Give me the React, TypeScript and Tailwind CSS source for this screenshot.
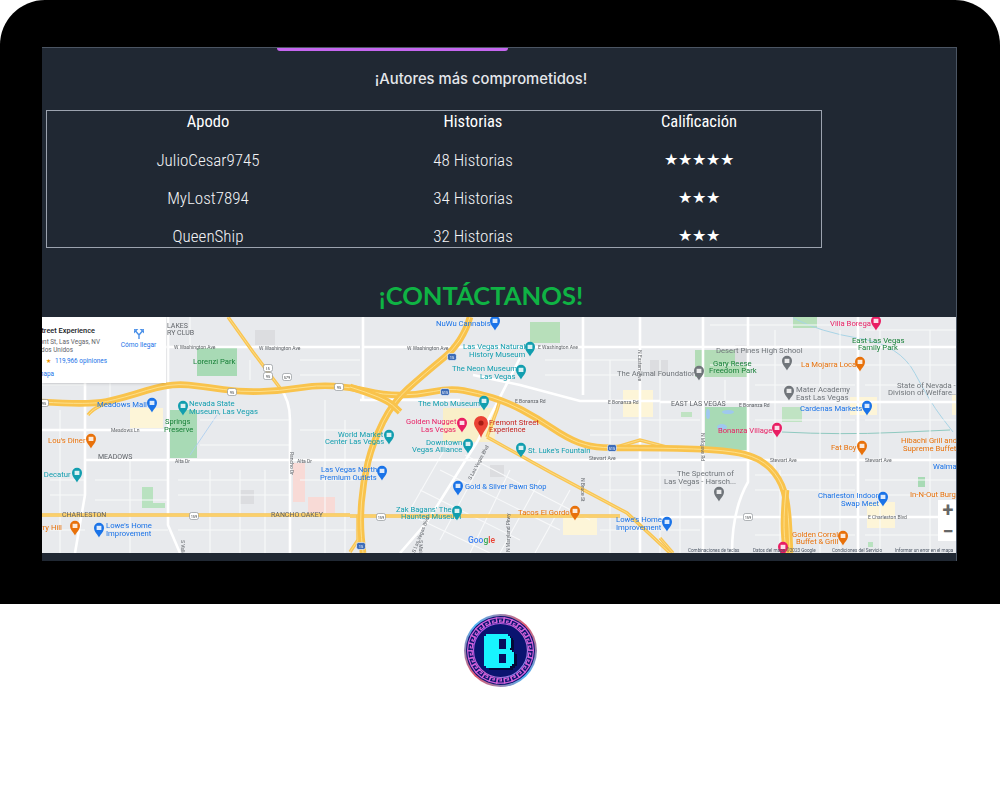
type Pt = [number, number];

// turns a list of points into a smooth path, midpoint to midpoint
function smooth(p: Pt[]) {
  let d = `M${p[0][0]} ${p[0][1]}`;
  for (let i = 1; i < p.length - 1; i++) {
    const mx = (p[i][0] + p[i + 1][0]) / 2;
    const my = (p[i][1] + p[i + 1][1]) / 2;
    d += `Q${p[i][0]} ${p[i][1]} ${mx} ${my}`;
  }
  const last = p[p.length - 1];
  return d + `L${last[0]} ${last[1]}`;
}

const mainRoads: string[] = [
  "M42 347H360M363 347H957",
  "M42 430H168",
  "M85 460H957",
  "M660 402H957",
  "M473 375L520 385L580 401H660",
  "M660 517H957",
  "M85 317V495L75 553",
  "M168 317V525L180 553",
  "M280 388Q290 400 290 420V553",
  "M363 317V400",
  "M583 317V395",
  "M640 317V553",
  "M703 317V553",
  "M748 317V482Q732 510 732 553",
  "M858 317V553",
  "M520 358L477 442L427 522L400 553",
  "M360 400H460",
];

const sideStreets: string[] = [
  "M42 370H85M42 385H85M50 442H85M50 480H85M50 495H85M50 530H85M95 480H168M95 500H168M95 530H168",
  "M178 480H290M178 495H290M178 530H290M200 445H290M200 420H290M300 360H360M300 375H360M300 430H360",
  "M300 480H355M300 530H355M545 360H640M545 375H640M590 420H700M590 435H640M600 475H700M600 490H700",
  "M600 530H700M710 325H855M710 365H855M755 385H855M755 420H855M755 475H855M755 490H855M755 535H855",
  "M865 330H957M865 365H957M865 385H957M865 420H957M865 480H957M865 495H957M865 535H957",
  "M110 317V400M60 410V553M130 460V553M210 470V553M240 470V553M265 470V553M325 400V553M345 420V553",
  "M190 317V345M250 360V380M610 360V553M660 360V553M680 470V553M725 380V400M775 330V470M820 330V553",
  "M840 330V553M880 330V553M930 330V553M780 470V553",
  "M420 490L520 540M400 510L490 553M440 470L560 530M465 455L590 520M490 440L610 505M450 440L410 510",
  "M480 465L440 540M510 470L470 553M540 480L500 553M570 490L535 553",
];

const freeways: string[] = [
  smooth([[42, 402], [90, 405], [123, 398], [170, 383], [207, 387], [240, 392], [280, 391], [317, 385], [350, 387], [383, 395], [417, 395], [450, 388], [477, 393], [507, 402], [537, 418], [567, 438], [590, 447], [617, 448], [660, 448], [727, 450], [760, 458], [780, 478], [788, 505], [790, 553]]),
  smooth([[470, 317], [463, 342], [423, 375], [393, 402], [373, 442], [363, 482], [360, 522], [363, 553]]),
  smooth([[350, 387], [385, 398], [400, 412]]),
  smooth([[786, 490], [783, 520], [786, 553]]),
];

const ramps: string[] = [
  "M228 317L253 352L280 388",
  "M42 515H350",
  "M350 516H620",
  "M487 437L550 472L627 513L670 553",
  "M350 552L358 540V515",
  "M660 538L673 553",
  "M88 415Q95 405 123 398",
  "M617 447L640 440L670 448",
  "M487 437L497 410L500 400",
];

const blocks: [number, number, number, number, string][] = [
  [197, 348, 40, 28, "#a8dab5"], [170, 410, 27, 48, "#a8dab5"], [142, 487, 11, 21, "#b9e2c0"],
  [153, 503, 12, 5, "#b9e2c0"], [530, 322, 30, 21, "#b7dfba"], [695, 350, 52, 27, "#b3dcb7"],
  [705, 407, 42, 43, "#a8dab5"], [782, 407, 20, 15, "#c0e3c3"], [681, 412, 11, 5, "#c0e3c3"],
  [793, 317, 24, 11, "#b7dfba"], [918, 477, 7, 10, "#a8dab5"], [868, 542, 5, 5, "#b9e2c0"],
  [130, 408, 33, 20, "#fdf5d8"], [623, 390, 30, 27, "#fdf5d8"], [563, 518, 34, 17, "#fdf5d8"],
  [850, 397, 27, 18, "#fdf5d8"], [867, 502, 28, 26, "#fdf5d8"], [443, 408, 52, 34, "#f9efc9"],
  [952, 395, 5, 20, "#fdf5d8"], [293, 463, 12, 39, "#f8dad6"], [308, 497, 27, 16, "#f8dad6"],
  [90, 360, 30, 22, "#dcdde0"], [240, 490, 14, 14, "#dcdde0"], [490, 465, 14, 12, "#dcdde0"],
  [735, 345, 12, 20, "#dcdde0"], [255, 330, 20, 15, "#dcdde0"], [650, 360, 18, 16, "#dcdde0"],
];

const teal = "#129eaf";
const blue = "#1a73e8";
const orange = "#e8710a";
const pink = "#e91e63";
const green = "#188038";
const gray = "#70757a";
const dark = "#5f6368";

const mapText: [number, number, string, string, number, number?][] = [
  [97, 407, "Meadows Mall", blue, 7.7], [189, 406, "Nevada State", teal, 7.7], [189, 414, "Museum, Las Vegas", teal, 7.7],
  [165, 424, "Springs", green, 7.5], [164, 432, "Preserve", green, 7.5], [48, 443, "Lou's Diner", orange, 7.7],
  [98, 459, "MEADOWS", dark, 7], [38, 477, "s Decatur", teal, 7.7], [36, 530, "erry Hill", orange, 7.7],
  [106, 528, "Lowe's Home", blue, 7.7], [106, 536, "Improvement", blue, 7.7], [62, 517, "CHARLESTON", dark, 7],
  [271, 517, "RANCHO OAKEY", dark, 7], [167, 328, "LAKES", dark, 7], [167, 335, "RY CLUB", dark, 7],
  [193, 364, "Lorenzi Park", green, 7.7], [174, 348.5, "W Washington Ave", dark, 5], [259, 350, "W Washington Ave", dark, 5],
  [111, 432, "Meadows Ln", dark, 5], [175, 463, "Alta Dr", dark, 5], [297, 463, "Alta Dr", dark, 5],
  [338, 437, "World Market", teal, 7.6], [325, 444, "Center Las Vegas", teal, 7.6], [321, 472, "Las Vegas North", blue, 7.6],
  [320, 480, "Premium Outlets", blue, 7.6], [436, 326, "NuWu Cannabis", blue, 7.7], [463, 349, "Las Vegas Natural", teal, 7.7],
  [469, 357, "History Museum", teal, 7.7], [452, 371, "The Neon Museum", teal, 7.7], [480, 379, "Las Vegas", teal, 7.7],
  [418, 406, "The Mob Museum", teal, 7.7], [406, 424, "Golden Nugget", pink, 7.6], [421, 432, "Las Vegas", pink, 7.6],
  [489, 425, "Fremont Street", "#c5221f", 7.5], [489, 432, "Experience", "#c5221f", 7.5], [426, 445, "Downtown", teal, 7.7],
  [412, 452, "Vegas Alliance", teal, 7.7], [465, 489, "Gold & Silver Pawn Shop", blue, 7.5], [396, 512, "Zak Bagans' The", teal, 7.6],
  [401, 519, "Haunted Museum", teal, 7.6], [518, 515, "Tacos El Gordo", orange, 7.7], [528, 453, "St. Luke's Fountain", teal, 7.5],
  [616, 522, "Lowe's Home", blue, 7.7], [616, 530, "Improvement", blue, 7.7], [617, 376, "The Animal Foundation", gray, 7.7],
  [716, 353, "Desert Pines High School", gray, 7.7], [713, 366, "Gary Reese", green, 7.7], [709, 373, "Freedom Park", green, 7.7],
  [801, 367, "La Mojarra Loca", orange, 7.7], [796, 392, "Mater Academy", gray, 7.7], [796, 400, "East Las Vegas", gray, 7.7],
  [671, 406, "EAST LAS VEGAS", dark, 7], [800, 411, "Cardenas Markets", blue, 7.7], [718, 433, "Bonanza Village", pink, 7.6],
  [831, 450, "Fat Boy", orange, 7.7], [677, 476, "The Spectrum of", gray, 7.7], [664, 484, "Las Vegas - Harsch...", gray, 7.7],
  [818, 498, "Charleston Indoor", blue, 7.6], [841, 506, "Swap Meet", blue, 7.7], [792, 537, "Golden Corral", orange, 7.6],
  [796, 544, "Buffet & Grill", orange, 7.6], [830, 326, "Villa Borega", pink, 7.7], [852, 343, "East Las Vegas", green, 7.7],
  [858, 350, "Family Park", green, 7.7], [897, 388, "State of Nevada -", gray, 7.7], [888, 395, "Division of Welfare...", gray, 7.7],
  [901, 443, "Hibachi Grill and", orange, 7.7], [903, 451, "Supreme Buffet", orange, 7.7], [933, 469, "Walmart", blue, 7.7],
  [910, 497, "In-N-Out Burger", orange, 7.7], [739, 407, "E Bonanza Rd", dark, 5], [515, 403, "E Bonanza Rd", dark, 5],
  [608, 404, "E Bonanza Rd", dark, 5], [538, 349, "E Washington Ave", dark, 5], [407, 350, "W Washington Ave", dark, 5],
  [589, 460, "Stewart Ave", dark, 5], [770, 462, "Stewart Ave", dark, 5], [865, 462, "Stewart Ave", dark, 5],
  [868, 519, "E Charleston Blvd", dark, 5],
  // names that run along the streets
  [290, 452, "Rancho Dr", dark, 5, 90], [471, 480, "S Las Vegas Blvd", dark, 5, -62], [638, 350, "N Eastern Ave", dark, 5, 90],
  [581, 478, "N Bruce St", dark, 5, 90], [701, 433, "N Mojave Rd", dark, 5, 90], [415, 553, "S Las Vegas Blvd", dark, 5, -68],
  [510, 552, "N Maryland Pkwy", dark, 5, -90], [419, 540, "S Main St", dark, 5, 90], [181, 540, "S Valley View", dark, 5, 90],
];

const pins: [number, number, string][] = [
  [152, 404, blue], [183, 407, teal], [91, 440, orange], [77, 474, teal], [75, 527, orange], [99, 529, blue],
  [495, 322, blue], [530, 348, teal], [521, 371, teal], [484, 402, teal], [462, 424, pink], [468, 445, teal],
  [389, 436, teal], [382, 472, blue], [458, 487, blue], [457, 512, teal], [575, 512, orange], [521, 449, teal],
  [667, 523, blue], [787, 362, gray], [699, 372, gray], [860, 363, orange], [789, 392, gray], [867, 407, blue],
  [777, 429, pink], [862, 447, orange], [719, 493, gray], [883, 498, blue], [843, 537, orange],
  [876, 322, pink], [783, 548, pink],
];

const shields: [number, number, string, boolean?][] = [
  [268, 368, "I5"], [268, 376, "95"], [287, 377, "579"], [232, 392, "95"], [339, 387, "95"], [194, 516, "159"],
  [44, 403, "95"], [381, 517, "159"], [748, 517, "159"], [452, 357, "15", true], [445, 392, "515", true],
  [612, 448, "515", true], [361, 546, "15", true],
];

function Pin({ x, y, color }: { x: number; y: number; color: string }) {
  return (
    <g transform={`translate(${x} ${y})`}>
      <path d="M0 8.6C-1 5.4-5 3.2-5-1.3A5 5 0 0 1 5-1.3C5 3.2 1 5.4 0 8.6Z" fill={color} />
      <path d="M-2.4-3.2H2.4V1H-2.4Z" fill="#fff" opacity="0.85" />
    </g>
  );
}

function Shield({ x, y, label, interstate }: { x: number; y: number; label: string; interstate?: boolean }) {
  return (
    <g>
      <rect x={x - 4.5} y={y - 3.5} width="9" height="7" rx="2" fill={interstate ? "#3d6cb8" : "#fff"} stroke={interstate ? "#fff" : "#80868b"} strokeWidth="0.6" />
      <text x={x} y={y + 1.6} fontSize="4" textAnchor="middle" fill={interstate ? "#fff" : "#3c4043"}>{label}</text>
    </g>
  );
}

function MapDrawing() {
  return (
    <svg viewBox="42 317 915 236" className="block h-[236px] w-[915px] blur-[0.3px]" style={{ fontFamily: "Roboto, sans-serif" }}>
      <rect x="42" y="317" width="915" height="236" fill="#e8eaed" />
      {blocks.map(([x, y, w, h, c], i) => (
        <rect key={i} x={x} y={y} width={w} height={h} fill={c} />
      ))}
      <ellipse cx="722" cy="427" rx="5" ry="3" fill="#9fc8ee" />
      <ellipse cx="728" cy="412" rx="6" ry="2" fill="#9fc8ee" />
      <ellipse cx="708" cy="414" rx="2" ry="5" fill="#9fc8ee" />
      <path d={smooth([[793, 318], [820, 332], [900, 345], [930, 402], [953, 432]])} fill="none" stroke="#a8d4e6" strokeWidth="1" />
      <path d={smooth([[782, 432], [840, 435], [950, 430]])} fill="none" stroke="#8fc9c0" strokeWidth="1" />
      <path d="M217 415L190 455" fill="none" stroke="#a8cdf0" strokeWidth="0.8" />
      {sideStreets.map((d) => (
        <path key={d} d={d} fill="none" stroke="#f8f9fa" strokeWidth="1.1" />
      ))}
      {mainRoads.map((d) => (
        <path key={d} d={d} fill="none" stroke="#fff" strokeWidth="2.6" />
      ))}
      {ramps.map((d) => (
        <g key={d}>
          <path d={d} fill="none" stroke="#f9c552" strokeWidth="3.4" />
          <path d={d} fill="none" stroke="#fde9a9" strokeWidth="0.6" />
        </g>
      ))}
      {freeways.map((d) => (
        <g key={d}>
          <path d={d} fill="none" stroke="#f9c34c" strokeWidth="6.6" strokeLinejoin="round" />
          <path d={d} fill="none" stroke="#fde293" strokeWidth="0.9" strokeLinejoin="round" />
        </g>
      ))}
      {shields.map(([x, y, label, interstate]) => (
        <Shield key={`${x}-${y}`} x={x} y={y} label={label} interstate={interstate} />
      ))}
      {pins.map(([x, y, c]) => (
        <Pin key={`${x}-${y}`} x={x} y={y} color={c} />
      ))}
      {mapText.map(([x, y, t, c, s, r], i) => (
        <text key={i} x={x} y={y} fill={c} fontSize={s} transform={r ? `rotate(${r} ${x} ${y})` : undefined}>{t}</text>
      ))}
      {/* fremont street marker */}
      <path d="M481 438C479 431 474 428 474 423A7 7 0 0 1 488 423C488 428 483 431 481 438Z" fill="#ea4335" />
      <circle cx="481" cy="423" r="2.6" fill="#a61b14" />
      <text x="468" y="543" fontSize="8.5" fontWeight="500" fill="#4285f4">Goo<tspan fill="#34a853">g</tspan><tspan fill="#ea4335">le</tspan></text>
      <text x="688" y="552" fontSize="4.6" fill="#4b5563">Combinaciones de teclas</text>
      <text x="753" y="552" fontSize="4.6" fill="#4b5563">Datos del mapa ©2023 Google</text>
      <text x="832" y="552" fontSize="4.6" fill="#4b5563">Condiciones del Servicio</text>
      <text x="895" y="552" fontSize="4.6" fill="#4b5563">Informar un error en el mapa</text>
    </svg>
  );
}

function PlaceCard() {
  return (
    <div className="absolute top-0 left-0 flex h-[66px] w-[124px] overflow-hidden bg-white font-['Roboto',sans-serif] shadow-sm">
      <div className="w-[66px] shrink-0 pt-[9px] text-right whitespace-nowrap">
        <div className="flex h-[10px] justify-end pr-[13px] text-[7.4px] leading-[10px] font-medium text-[#202124]">Fremont Street Experience</div>
        <div className="mt-[2px] flex justify-end pr-[8px] text-[6.4px] leading-[8px] text-[#5f6368]">310 Fremont St, Las Vegas, NV</div>
        <div className="flex justify-end pr-[35px] text-[6.4px] leading-[8px] text-[#5f6368]">89101, Estados Unidos</div>
        <div className="mt-[3px] flex items-center justify-end gap-[4px] pr-[1px] text-[6.4px] leading-[8px] text-[#1a73e8]">
          <span className="text-[#f29900]">★</span>
          <span>119,966 opiniones</span>
        </div>
        <div className="mt-[5px] flex justify-end pr-[54px] text-[6.4px] leading-[8px] text-[#1a73e8]">Ver mapa</div>
      </div>
      <div className="flex w-[58px] flex-col items-center pt-[12px] pl-[3px]">
        <svg width="10" height="10" viewBox="0 0 10 10">
          <path d="M5 10V6L1.6 2M5 6L8.4 2M0 0H3.4L0 3.4ZM10 0H6.6L10 3.4Z" stroke="#4a90e8" strokeWidth="1.4" fill="none" />
        </svg>
        <div className="mt-[2px] text-[6.6px] leading-[9px] whitespace-nowrap text-[#1a73e8]">Cómo llegar</div>
      </div>
    </div>
  );
}

function Logo() {
  const keys = Array.from({ length: 26 }, (_, i) => (i * 360) / 26);
  return (
    <div className="h-[73px] w-[73px] rounded-full bg-[conic-gradient(from_45deg,#e0586e,#4fb4f5,#e0586e,#4fb4f5,#e0586e)] p-[2px]">
      <svg width="69" height="69" viewBox="2 2 69 69" className="block">
        <defs>
          <linearGradient id="key" x1="0" y1="0" x2="1" y2="1">
            <stop offset="0" stopColor="#9a4fe8" />
            <stop offset="0.55" stopColor="#d060d0" />
            <stop offset="1" stopColor="#6a8cf0" />
          </linearGradient>
        </defs>
        <circle cx="36.5" cy="36.5" r="34.5" fill="#0a1470" />
        {keys.map((a) => (
          <path
            key={a}
            d="M32.5 9.4V3.8H40V8.2H35.6V6.2H37.6"
            fill="none"
            stroke="#cf62d8"
            strokeWidth="1.2"
            transform={`rotate(${a} 36.5 36.5)`}
          />
        ))}
        <circle cx="36.5" cy="36.5" r="27" fill="none" stroke="url(#key)" strokeWidth="1.2" />
        <path d="M25 22H47V24H49V26H50V36H49V38H51V40H53V52H51V54H49V56H25V54H23V24H25Z" fill="#030a3a" />
        <path d="M22 20H44V22H46V24H47V34H46V36H48V38H50V50H48V52H46V54H22V52H20V22H22Z" fill="#18f4ff" />
        <path d="M35 25H42V35H35ZM35 40H42V49H35Z" fill="#07105e" />
      </svg>
    </div>
  );
}

const rows = [
  ["JulioCesar9745", "48 Historias", "★★★★★"],
  ["MyLost7894", "34 Historias", "★★★"],
  ["QueenShip", "32 Historias", "★★★"],
];

export default function App() {
  return (
    <div className="h-[803px] w-[1000px] overflow-hidden bg-white">
      <div className="h-[604px] rounded-t-[45px] bg-black px-[42px] pt-[47px]">
        <div className="h-[514px] w-[915px] overflow-hidden border-t border-r border-[#4b5563] bg-[#202833]">
          <div className="ml-[235px] h-[3px] w-[231px] rounded-b-[10px] bg-[#c566ef]" />
          <h2 className="mt-[16px] pr-[36px] text-center font-['Inter',sans-serif] text-[14.8px] leading-6 font-medium text-[#e5e7eb]">
            ¡Autores más comprometidos!
          </h2>
          <div className="mt-[19px] ml-1 grid h-[138px] w-[776px] grid-cols-[322px_208px_1fr] gap-y-4 overflow-hidden border border-[#9ca3af] text-center font-['Roboto',sans-serif] text-[17px] leading-[22px] font-light text-[#f3f4f6] [font-stretch:75%]">
            <div className="text-[16.5px] font-normal text-white">Apodo</div>
            <div className="text-[16.5px] font-normal text-white">Historias</div>
            <div className="text-[16.5px] font-normal text-white">Calificación</div>
            {rows.map((r) => (
              <div key={r[0]} className="contents">
                <div>{r[0]}</div>
                <div>{r[1]}</div>
                <div className="font-['DejaVu_Sans',sans-serif] text-[16px] leading-[22px] text-white">{r[2]}</div>
              </div>
            ))}
          </div>
          <h2 className="mt-[28px] pr-[36px] text-center font-['Lato',sans-serif] text-[25.6px] leading-[38px] font-bold text-[#0fb344]">
            ¡CONTÁCTANOS!
          </h2>
          <div className="relative mt-[3px] h-[236px] overflow-hidden">
            <MapDrawing />
            <PlaceCard />
            <div className="absolute top-[183px] right-0 flex h-[41px] w-[18px] flex-col items-center justify-around bg-white pl-[2px] font-['Roboto',sans-serif] text-[20px] leading-none font-bold text-[#666]">
              <span>+</span>
              <span>−</span>
            </div>
          </div>
        </div>
      </div>
      <div className="flex justify-center pt-[10px]">
        <Logo />
      </div>
    </div>
  );
}
